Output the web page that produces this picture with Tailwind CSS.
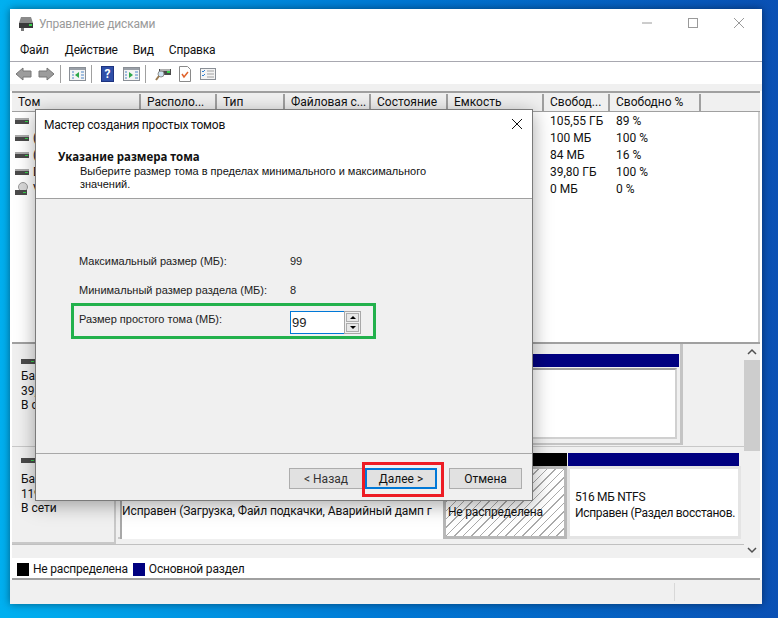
<!DOCTYPE html>
<html lang="ru">
<head>
    <meta charset="UTF-8">
    <title>Управление дисками</title>
    <script src="https://cdn.jsdelivr.net/npm/@tailwindcss/browser@4"></script>
</head>
<body class="relative w-[778px] h-[618px] overflow-hidden bg-gradient-to-r from-[#00b0f0] via-[#0078d4] to-[#0a50b4] font-['Roboto',sans-serif] text-[12px] leading-[16px] text-[#111]">

    <!-- Окно: Управление дисками -->
    <div class="absolute left-[10px] top-[9px] w-[752px] h-[595px] bg-white flex flex-col shadow-[0_0_8px_rgba(0,0,0,0.45)]">
        <div class="h-[30px] shrink-0 flex items-center pl-[8px] relative">
            <svg width="16" height="16" viewBox="0 0 16 16"><path d="M3 1h10l2 6H1z" fill="#8a8a8a"/><rect x="1" y="7" width="14" height="5" fill="#3a3a3a"/><rect x="11" y="8" width="3" height="2" fill="#35d04a"/><path d="M3 12h3v3H3z" fill="#777"/></svg>
            <span class="ml-[5px] text-[#9a9a9a] tracking-[-0.2px]">Управление дисками</span>
            <div class="ml-auto flex items-center">
                <svg width="46" height="30" viewBox="0 0 46 30"><path d="M18 14h10" stroke="#9a9a9a"/></svg>
                <svg width="46" height="30" viewBox="0 0 46 30"><rect x="18.500" y="9.500" width="9" height="9" fill="none" stroke="#9a9a9a"/></svg>
                <svg width="46" height="30" viewBox="0 0 46 30"><path d="M18 9l10 10M28 9L18 19" stroke="#9a9a9a"/></svg>
            </div>
        </div>

        <div class="h-[22px] shrink-0 flex items-center pl-[10px] border-b border-[#a8a8b0] box-content tracking-[-0.2px]">
            <span>Файл</span><span class="ml-[16px]">Действие</span><span class="ml-[15px]">Вид</span><span class="ml-[15px]">Справка</span>
        </div>

        <!-- Панель инструментов -->
        <div class="h-[22px] shrink-0 flex items-center pl-[5px] pt-[2px]">
            <svg width="17" height="14" viewBox="0 0 17 14"><path d="M8 1v3h8v6H8v3L1 7z" fill="#9c9c9c" stroke="#777"/></svg>
            <svg class="ml-[6px]" width="17" height="14" viewBox="0 0 17 14"><path d="M9 1v3H1v6h8v3l7-6z" fill="#9c9c9c" stroke="#777"/></svg>
            <div class="ml-[5px] w-px h-[18px] bg-[#a0a0a0]"></div>
            <svg class="ml-[8px]" width="17" height="14" viewBox="0 0 17 14"><rect x="0.500" y="0.500" width="16" height="13" fill="#f4f4f4" stroke="#8a8f96"/><rect x="1" y="1" width="15" height="2" fill="#9aa0a8"/><path d="M3 5h2M3 8h2M3 11h2M12 5h3M12 8h3M12 11h3" stroke="#4d86c8"/><path d="M10 5v6L6 8z" fill="#2fa84a"/></svg>
            <div class="ml-[5px] w-px h-[18px] bg-[#a0a0a0]"></div>
            <div class="ml-[9px] w-[13px] h-[16px] bg-[#2f4fa8] border border-[#1d3380] flex items-center justify-center text-white font-bold text-[12px]">?</div>
            <svg class="ml-[9px]" width="17" height="14" viewBox="0 0 17 14"><rect x="0.500" y="0.500" width="16" height="13" fill="#f4f4f4" stroke="#8a8f96"/><rect x="1" y="1" width="15" height="2" fill="#9aa0a8"/><path d="M2 5h2M2 8h2M2 11h2M12 5h3M12 8h3M12 11h3" stroke="#4d86c8"/><path d="M6 5v6l4-3z" fill="#2fa84a"/></svg>
            <div class="ml-[5px] w-px h-[18px] bg-[#a0a0a0]"></div>
            <svg class="ml-[9px]" width="16" height="16" viewBox="0 0 16 16"><rect x="4" y="3" width="12" height="6" fill="#4a4a4a"/><rect x="5" y="3" width="10" height="2" fill="#b0b0b0"/><rect x="12" y="5" width="3" height="2" fill="#35d04a"/><circle cx="6" cy="8" r="3" fill="#cfe4f2" stroke="#8c8c8c"/><path d="M4 10l-3 4" stroke="#9a7a50" stroke-width="2"/></svg>
            <svg class="ml-[8px]" width="12" height="16" viewBox="0 0 12 16"><path d="M0.500 0.500h8l3 3v12h-11z" fill="#fff" stroke="#8a8a8a"/><path d="M3 8l2 3 4-5" fill="none" stroke="#e0622a" stroke-width="1.500"/></svg>
            <svg class="ml-[9px]" width="16" height="12" viewBox="0 0 16 12"><rect x="0.500" y="0.500" width="15" height="11" fill="#f4f4f4" stroke="#8a8f96"/><path d="M2 3l1 1 2-2M2 7l1 1 2-2" fill="none" stroke="#2f7fd0"/><path d="M7 3h7M7 6h7M7 9h7" stroke="#a0a0a0"/></svg>
        </div>

        <div class="h-[7px] shrink-0 bg-[#f0f0f0]"></div>

        <!-- Список томов -->
        <div class="h-[251px] shrink-0 mx-[2px] border-t-2 border-[#a0a0a0] flex flex-col">
            <div class="grid grid-cols-[129px_76px_68px_86px_77px_96px_66px_91px_59px] h-[19px] pt-[1px] bg-[#f0f0f0] border-b border-[#a0a0a0] shrink-0">
                <div class="pl-[6px] border-r-2 border-[#a0a0a0]">Том</div>
                <div class="pl-[6px] border-r-2 border-[#a0a0a0]">Располо...</div>
                <div class="pl-[6px] border-r-2 border-[#a0a0a0]">Тип</div>
                <div class="pl-[6px] border-r-2 border-[#a0a0a0]">Файловая с...</div>
                <div class="pl-[6px] border-r-2 border-[#a0a0a0]">Состояние</div>
                <div class="pl-[6px] border-r-2 border-[#a0a0a0]">Емкость</div>
                <div class="pl-[6px] border-r-2 border-[#a0a0a0]">Свобод...</div>
                <div class="pl-[6px] border-r-2 border-[#a0a0a0]">Свободно %</div>
                <div></div>
            </div>
            <div class="flex-1 border-r-2 border-[#d0d0d0]">
                <div class="h-[17px] flex items-center pl-[3px]"><svg width="14" height="6" viewBox="0 0 14 6"><rect width="14" height="6" fill="#4a4a4a"/><rect width="14" height="2" fill="#aaa"/><rect x="10" y="3" width="3" height="1" fill="#35d04a"/></svg><span class="w-[521px]"></span><span class="w-[66px]">105,55 ГБ</span><span>89 %</span></div>
                <div class="h-[17px] flex items-center pl-[3px]"><svg width="14" height="6" viewBox="0 0 14 6"><rect width="14" height="6" fill="#4a4a4a"/><rect width="14" height="2" fill="#aaa"/><rect x="10" y="3" width="3" height="1" fill="#35d04a"/></svg><span class="w-[521px] pl-[4px]">(C:)</span><span class="w-[66px]">100 МБ</span><span>100 %</span></div>
                <div class="h-[17px] flex items-center pl-[3px]"><svg width="14" height="6" viewBox="0 0 14 6"><rect width="14" height="6" fill="#4a4a4a"/><rect width="14" height="2" fill="#aaa"/><rect x="10" y="3" width="3" height="1" fill="#35d04a"/></svg><span class="w-[521px] pl-[4px]">(C:)</span><span class="w-[66px]">84 МБ</span><span>16 %</span></div>
                <div class="h-[17px] flex items-center pl-[3px]"><svg width="14" height="6" viewBox="0 0 14 6"><rect width="14" height="6" fill="#4a4a4a"/><rect width="14" height="2" fill="#aaa"/><rect x="10" y="3" width="3" height="1" fill="#35d04a"/></svg><span class="w-[521px] pl-[4px]">D:</span><span class="w-[66px]">39,80 ГБ</span><span>100 %</span></div>
                <div class="h-[17px] flex items-center pl-[3px]"><svg width="14" height="14" viewBox="0 0 14 14"><circle cx="8" cy="5" r="4.500" fill="#d8d8d8" stroke="#999"/><rect y="8" width="12" height="5" fill="#4a4a4a"/><rect x="8" y="10" width="3" height="1" fill="#35d04a"/></svg><span class="w-[521px] pl-[4px]">V:</span><span class="w-[66px]">0 МБ</span><span>0 %</span></div>
            </div>
        </div>

        <!-- Графическое представление дисков -->
        <div class="h-[216px] shrink-0 mx-[2px] border-t-2 border-[#a0a0a0] bg-[#f0f0f0] flex">
            <div class="w-[732px] border-b border-[#c0c0c0] h-[201px] flex flex-col">
                <!-- Диск 0 -->
                <div class="h-[103px] flex border-b border-[#c8c8c8]">
                    <div class="w-[106px] pl-[9px] pt-[15px] shrink-0 leading-[14.500px]">
                        <svg width="15" height="5" viewBox="0 0 15 5"><rect width="15" height="5" fill="#4a4a4a"/><rect x="10" y="2" width="3" height="1" fill="#35d04a"/></svg>
                        <p class="mt-[5px]">Базовый</p><p>39,80 ГБ</p><p>В сети</p>
                    </div>
                    <div class="w-[565px] h-[101px] border-r-[3px] border-b-2 border-[#c4c4c4] pt-[10px] pr-[1px]">
                        <div class="h-[13px] bg-[#000080]"></div>
                        <div class="h-[71px] ml-[2px] mr-[2px] mt-[1px] border-2 border-[#d0d0d0] border-t-[#a0a0a0] bg-white"></div>
                    </div>
                </div>
                <!-- Диск 1 -->
                <div class="flex-1 flex">
                    <div class="w-[104px] pl-[9px] pt-[11px] shrink-0 border-r-2 border-b-2 border-[#c8c8c8] leading-[14.500px]">
                        <svg width="15" height="5" viewBox="0 0 15 5"><rect width="15" height="5" fill="#4a4a4a"/><rect x="10" y="2" width="3" height="1" fill="#35d04a"/></svg>
                        <p class="mt-[9px]">Базовый</p><p class="tracking-[-0.3px]">119,...</p><p>В сети</p>
                    </div>
                    <div class="w-[325px] ml-[2px] h-[92px] pt-[6px] border-b-2 border-[#c8c8c8]">
                        <div class="h-[13px] bg-[#000080]"></div>
                        <div class="h-[72px] ml-[2px] mt-[1px] border-l-2 border-[#a8a8a8] bg-white pt-[36px] whitespace-nowrap tracking-[-0.1px]">Исправен (Загрузка, Файл подкачки, Аварийный дамп г</div>
                    </div>
                    <div class="w-[124px] h-[92px] pt-[6px]">
                        <div class="h-[13px] bg-black"></div>
                        <div class="h-[73px] border-[3px] border-[#b8b8b8] bg-[repeating-linear-gradient(135deg,#fff_0,#fff_5px,#aaa_5px,#aaa_6px)] pl-[2px] pt-[35px] whitespace-nowrap tracking-[-0.2px]">Не распределена</div>
                    </div>
                    <div class="w-[174px] h-[92px] pt-[6px]">
                        <div class="h-[13px] ml-[1px] mr-[2px] bg-[#000080]"></div>
                        <div class="h-[73px] border-[3px] border-[#e4e4e4] bg-white pl-[5px] pt-[20px] whitespace-nowrap tracking-[-0.3px]">516 МБ NTFS<br>Исправен (Раздел восстанов.</div>
                    </div>
                </div>
            </div>
            <!-- Полоса прокрутки -->
            <div class="w-[16px] shrink-0 flex flex-col items-center">
                <svg class="h-[16px]" width="16" height="16" viewBox="0 0 16 16"><path d="M4 10l4-4 4 4" fill="none" stroke="#505050" stroke-width="1.500"/></svg>
                <div class="w-full h-[91px] bg-[#cdcdcd]"></div>
                <div class="flex-1"></div>
                <svg class="h-[16px]" width="16" height="16" viewBox="0 0 16 16"><path d="M4 6l4 4 4-4" fill="none" stroke="#505050" stroke-width="1.500"/></svg>
            </div>
        </div>

        <!-- Легенда -->
        <div class="h-[22px] shrink-0 mx-[2px] bg-white border-b-2 border-[#a0a0a0] flex items-center pl-[5px] pt-[2px] tracking-[-0.2px]">
            <div class="w-[12px] h-[13px] bg-black"></div><span class="ml-[4px]">Не распределена</span>
            <div class="ml-[5px] w-[12px] h-[13px] bg-[#000080]"></div><span class="ml-[4px]">Основной раздел</span>
        </div>

        <!-- Строка состояния -->
        <div class="flex-1 bg-[#f0f0f0] flex justify-end">
            <div class="w-[133px] border-r border-[#d8d8d8] my-[3px]"></div>
            <div class="w-[87px]"></div>
        </div>
    </div>

    <!-- Мастер создания простых томов -->
    <div class="absolute left-[35px] top-[109px] w-[498px] h-[392px] bg-[#f0f0f0] border border-[#7a7a7a] flex flex-col shadow-[0_4px_18px_rgba(0,0,0,0.35)]">
        <div class="h-[89px] shrink-0 bg-white border-b border-[#a0a0a0] relative">
            <div class="h-[29px] flex items-center pl-[8px] tracking-[-0.2px]">Мастер создания простых томов
                <svg class="absolute right-[9px] top-[8px]" width="12" height="12" viewBox="0 0 12 12"><path d="M1 1l10 10M11 1L1 11" stroke="#111"/></svg>
            </div>
            <p class="ml-[22px] mt-[10px] font-bold font-['Noto_Sans',sans-serif] text-[11.500px]">Указание размера тома</p>
            <p class="ml-[44px] font-['Liberation_Sans',sans-serif] text-[11px] leading-[13px]">Выберите размер тома в пределах минимального и максимального<br>значений.</p>
        </div>

        <div class="flex-1 flex flex-col font-['Liberation_Sans',sans-serif] text-[11px] text-[#222] pt-[54px] pl-[35px]">
            <div class="h-[16px] flex pl-[8px]"><span class="w-[211px]">Максимальный размер (МБ):</span><span>99</span></div>
            <div class="h-[16px] mt-[13px] flex pl-[8px]"><span class="w-[211px]">Минимальный размер раздела (МБ):</span><span>8</span></div>
            <div class="mt-[5px] w-[305px] h-[36px] border-[3px] border-[#22b14c] flex pl-[5px] items-start">
                <span class="w-[211px] pt-[5px]">Размер простого тома (МБ):</span>
                <div class="flex mt-[5px]">
                    <div class="w-[54px] h-[23px] bg-white border border-r-0 border-[#0078d7] pl-[1px] text-[13px] leading-[21px]">99</div>
                    <div class="w-[17px] h-[23px] border border-[#a8a8a8] flex flex-col gap-[1px] p-[1px]">
                        <div class="flex-1 bg-[#e8e8e8] border border-[#adadad] flex items-center justify-center"><div class="w-0 h-0 border-x-[3px] border-x-transparent border-b-[3px] border-b-black"></div></div>
                        <div class="flex-1 bg-[#e8e8e8] border border-[#adadad] flex items-center justify-center"><div class="w-0 h-0 border-x-[3px] border-x-transparent border-t-[3px] border-t-black"></div></div>
                    </div>
                </div>
            </div>
        </div>

        <div class="h-[47px] shrink-0 border-t border-[#a8a8a8] flex items-start pl-[253px] pt-[14px]">
            <div class="w-[74px] h-[21px] bg-[#e1e1e1] border border-[#adadad] flex items-center justify-center text-[#333]">&lt; Назад</div>
            <div class="ml-[2px] w-[72px] h-[21px] bg-[#e1e1e1] border-2 border-[#0078d7] flex items-center justify-center">Далее &gt;</div>
            <div class="ml-[12px] w-[73px] h-[21px] bg-[#e1e1e1] border border-[#adadad] flex items-center justify-center">Отмена</div>
        </div>
    </div>

    <!-- Красная рамка вокруг кнопки -->
    <div class="absolute left-[362px] top-[462px] w-[82px] h-[35px] border-[3px] border-[#ed1c24]"></div>
</body>
</html>
